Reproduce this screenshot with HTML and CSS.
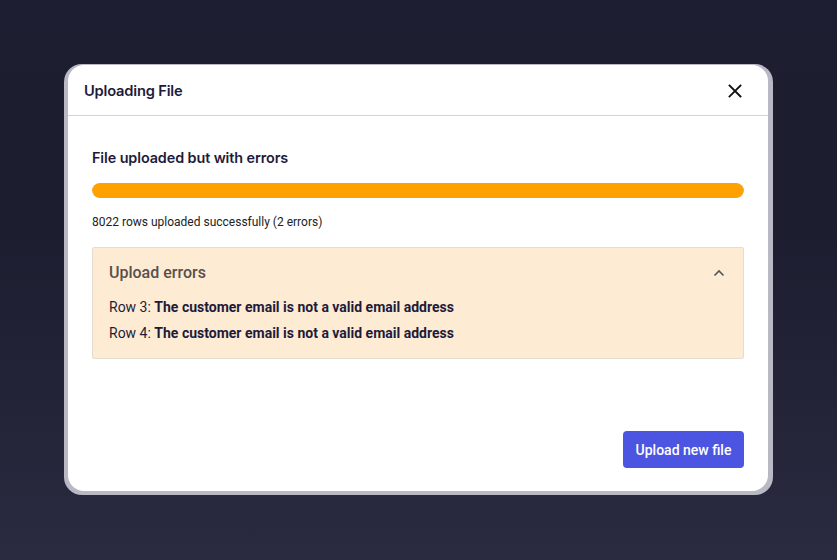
FILE: index.html
```html
<!DOCTYPE html>
<html>
<head>
<meta charset="utf-8">
<link rel="stylesheet" href="styles.css">
</head>
<body>
<div class="backdrop">
  <div class="frame">
    <div class="modal">
      <div class="modal-header">
        <h1 class="modal-title">Uploading File</h1>
        <button class="close" aria-label="Close">
          <svg width="14" height="14" viewBox="0 0 14 14"><path d="M1.5 1.5L12.5 12.5M12.5 1.5L1.5 12.5" stroke="#111" stroke-width="1.8" stroke-linecap="square"/></svg>
        </button>
      </div>
      <div class="modal-body">
        <h2 class="status">File uploaded but with errors</h2>
        <div class="progress"><div class="progress-fill" style="width:100%"></div></div>
        <p class="summary">8022 rows uploaded successfully (2 errors)</p>
        <div class="errors">
          <div class="errors-head">
            <span class="errors-title">Upload errors</span>
            <svg class="chev" width="12" height="8" viewBox="0 0 12 8"><path d="M1.5 6.5L6 2L10.5 6.5" fill="none" stroke="#555" stroke-width="1.6"/></svg>
          </div>
          <p class="err-row">Row 3: <b>The customer email is not a valid email address</b></p>
          <p class="err-row">Row 4: <b>The customer email is not a valid email address</b></p>
        </div>
      </div>
      <div class="modal-footer">
        <button class="primary">Upload new file</button>
      </div>
    </div>
  </div>
</div>
</body>
</html>
```
FILE: styles.css
```css
* { box-sizing: border-box; }
html, body { margin: 0; padding: 0; }
body {
  width: 837px;
  height: 560px;
  overflow: hidden;
  background: linear-gradient(180deg, #1d1e31 0%, #1d1d30 40%, #2a2a40 100%);
  font-family: Inter, "Noto Sans", sans-serif;
}
.backdrop {
  height: 560px;
  padding: 64px 64px 0 64px;
}
.frame {
  width: 709px;
  height: 431px;
  background: #b9b9c6;
  border-radius: 18px;
  padding: 1px 5px 4px 4px;
}
.modal {
  height: 100%;
  background: #fff;
  border-radius: 16px;
  display: flex;
  flex-direction: column;
}
.modal-header {
  height: 51px;
  border-bottom: 1px solid #d3d3da;
  display: flex;
  align-items: center;
  justify-content: space-between;
  padding: 1px 26px 0 16px;
}
.modal-title {
  margin: 0;
  font-size: 14.7px;
  font-weight: 600;
  color: #1e1b3a;
  letter-spacing: -0.2px;
}
.close {
  border: 0;
  background: none;
  padding: 0;
  display: flex;
}
.modal-body {
  padding: 33px 24px 0 24px;
  flex: 1;
}
.status {
  margin: 0;
  font-size: 14.4px;
  font-weight: 600;
  color: #1e1b3a;
  line-height: 18px;
  letter-spacing: -0.1px;
}
.progress {
  margin-top: 16px;
  height: 15px;
  border-radius: 8px;
  background: #eee;
  overflow: hidden;
}
.progress-fill {
  height: 100%;
  background: #ffa100;
  border-radius: 8px;
}
.summary {
  margin: 17px 0 0 0;
  font-family: Roboto, "Liberation Sans", sans-serif;
  font-size: 12px;
  color: #222;
  line-height: 15px;
}
.errors {
  margin-top: 17px;
  background: #fdebd3;
  border: 1px solid #e6ddd2;
  border-radius: 2px;
  padding: 15px 16px 17px 16px;
  font-family: Roboto, "Liberation Sans", sans-serif;
}
.errors-head {
  display: flex;
  align-items: center;
  justify-content: space-between;
  padding-right: 2px;
}
.errors-title {
  font-size: 16px;
  font-weight: 500;
  color: #57504c;
  line-height: 20px;
}
.err-row {
  margin: 16px 0 0 0;
  font-size: 14px;
  color: #1e1b3a;
  line-height: 16px;
}
.err-row + .err-row { margin-top: 10px; }
.err-row b { font-weight: 700; }
.modal-footer {
  display: flex;
  justify-content: flex-end;
  padding: 0 24px 23px 24px;
}
.primary {
  width: 121px;
  height: 37px;
  border: 0;
  border-radius: 4px;
  background: #4b55e2;
  color: #fff;
  font-family: Roboto, "Liberation Sans", sans-serif;
  font-size: 14px;
  font-weight: 500;
}
```
